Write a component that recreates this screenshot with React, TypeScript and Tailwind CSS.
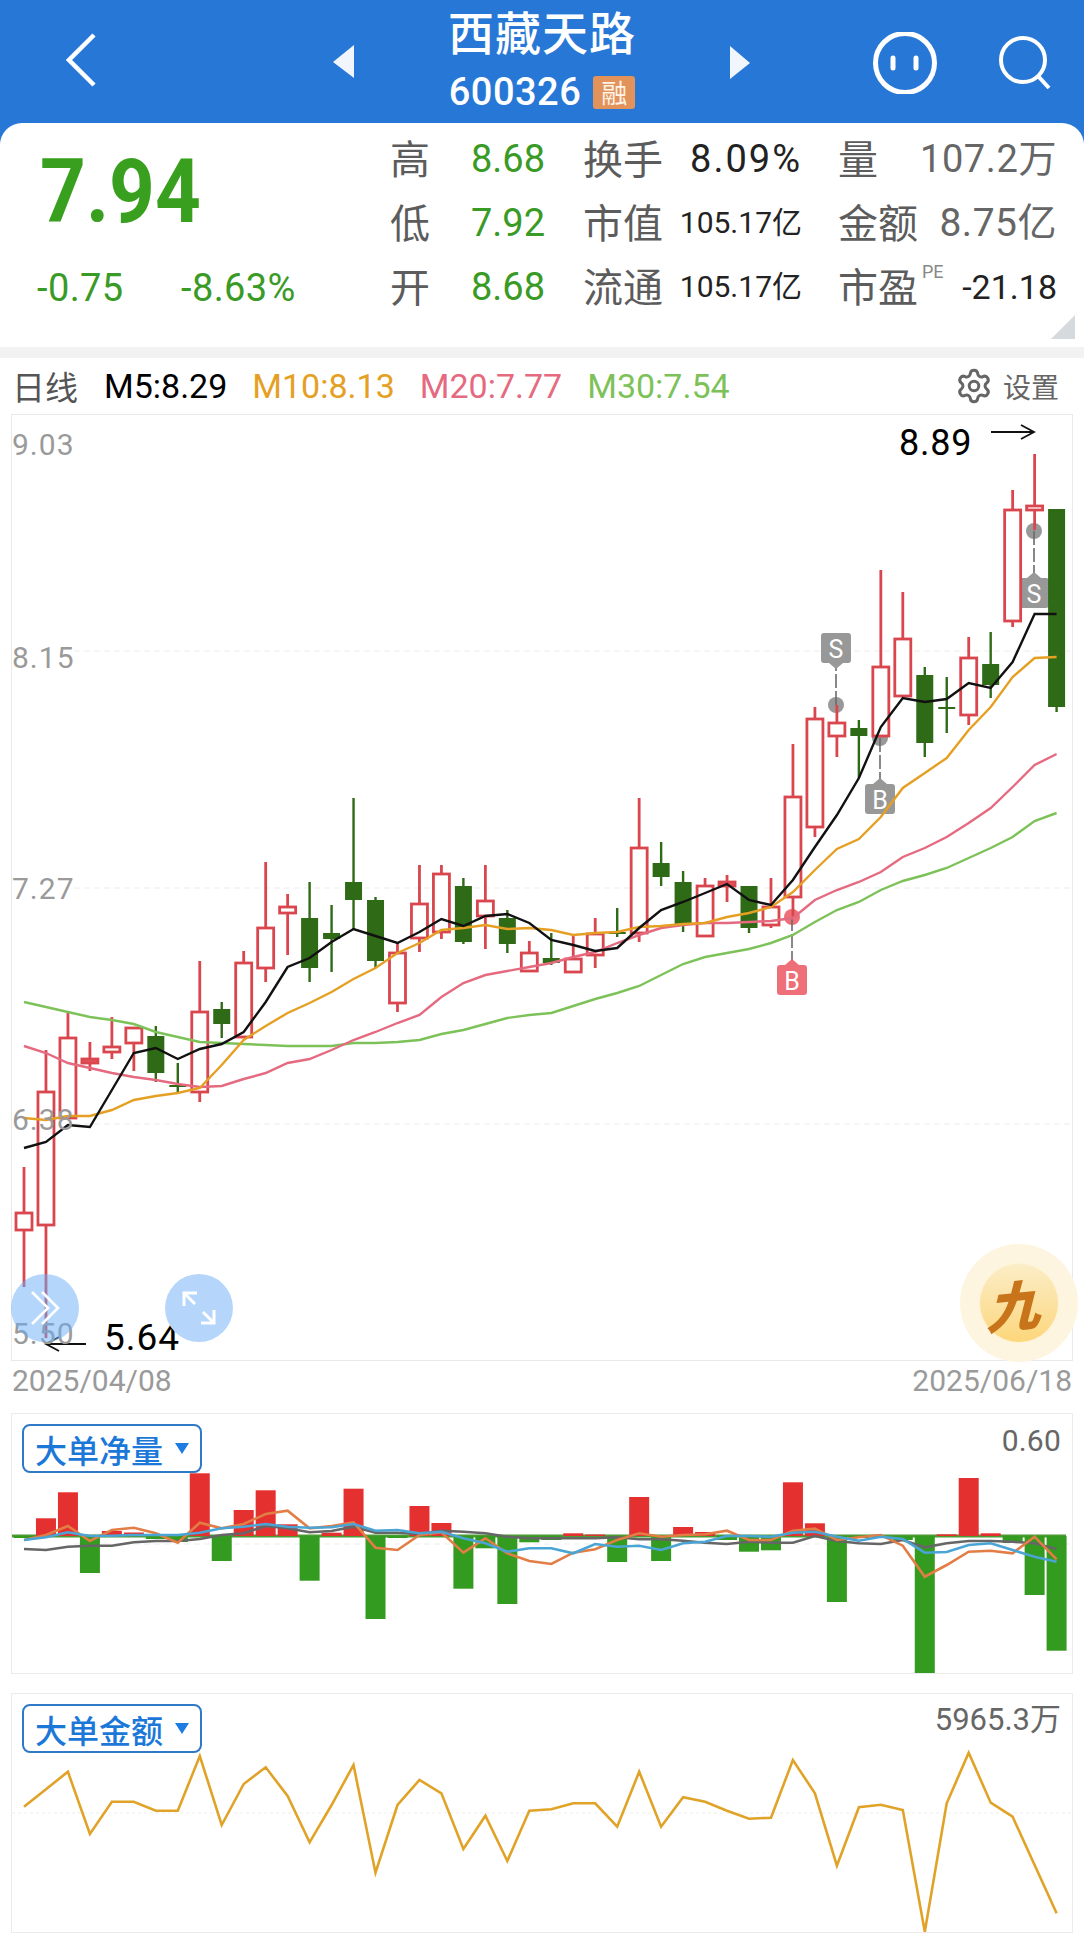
import React from "react";
import { Settings } from "lucide-react";

const X = (i: number) => 24 + 21.97 * i;
type C = [number, number, number, number, number];
// 1 = rising (hollow red), 0 = falling (solid green): type, high, bodyTop, bodyBottom, low
const candles: C[] = [
  [1,1167,1213,1230,1287],[1,1050,1092,1225,1338],[1,1013,1038,1118,1118],[2,1042,1059,1063,1071],
  [1,1017,1047,1052,1059],[1,1028,1028,1043,1071],[0,1026,1036,1073,1082],[0,1063,1085,1087,1094],
  [1,961,1012,1092,1102],[0,1002,1009,1024,1038],[1,951,963,1037,1037],[1,862,928,968,982],
  [1,894,907,913,955],[0,882,918,968,982],[0,905,933,939,972],[0,798,882,900,929],
  [0,897,900,961,968],[1,942,953,1003,1012],[1,865,904,938,952],[1,865,874,932,939],
  [0,878,886,942,944],[1,865,901,916,949],[0,910,918,944,953],[1,941,953,971,971],
  [0,933,958,963,965],[1,935,959,972,972],[1,918,934,955,968],[0,908,932,934,937],
  [1,798,848,933,942],[0,842,863,877,886],[0,871,882,924,932],[1,878,886,936,936],
  [2,875,882,886,902],[0,886,886,928,933],[1,878,907,925,928],[1,744,797,897,917],
  [1,707,719,827,837],[1,705,723,736,757],[0,720,728,736,778],[1,570,667,736,736],
  [1,592,639,696,696],[0,667,675,743,757],[0,677,707,708,733],[1,637,658,715,725],
  [0,632,664,685,698],[1,490,510,621,627],[1,454,506,510,530],[0,509,509,707,712],
];
const m5 = [1148,1142,1125,1127,1090,1053,1048,1059,1049,1044,1032,1002,967,958,942,929,936,943,932,919,926,916,914,923,940,945,951,948,928,910,902,893,884,900,905,880,847,815,778,727,698,702,699,683,688,662,614,614];
const m10 = [1118,1120,1116,1116,1110,1100,1096,1093,1088,1065,1040,1026,1013,1003,992,979,968,953,943,930,928,925,929,928,930,935,933,932,927,926,924,923,917,913,907,892,870,849,839,817,788,773,758,730,707,677,658,657];
const m20 = [1046,1053,1063,1068,1073,1077,1080,1084,1087,1086,1079,1073,1063,1059,1050,1040,1032,1023,1015,997,983,975,971,967,963,957,952,943,935,928,925,923,923,922,921,918,900,890,882,872,857,848,837,823,808,787,765,754];
const m30 = [1002,1007,1012,1017,1020,1024,1032,1037,1042,1043,1044,1045,1046,1046,1046,1043,1043,1042,1040,1034,1030,1024,1018,1015,1013,1006,999,993,986,975,964,957,953,949,943,935,922,910,902,890,881,875,868,858,848,837,821,813];
const bars = [-2,17.7,43.7,-37,5,3.5,-3,-6,62.7,-25,26,45.7,11.7,-44.7,3.3,47.3,-83,-2,30,13,-52.7,-12.3,-68,-6.3,-4,2.7,1.5,-26,39,-25,9,4,-4,-15.7,-14.3,53.7,12.7,-66,-2,-1,-4,-138,1.7,58,2.7,-7,-59,-114.7];
const orange = [420,405,378,423,390,383,400,428,368,385,372,342,332,385,378,367,443,450,405,397,458,415,460,483,492,458,448,420,400,410,405,403,392,420,420,392,386,420,412,405,437,530,495,455,452,460,410,478];
const blue = [420,412,397,408,407,405,405,405,398,385,380,372,380,383,382,372,392,390,400,395,415,430,455,445,445,460,432,440,437,450,430,425,408,408,410,398,395,410,422,410,417,458,456,435,430,450,470,485];
const gray = [447,450,440,437,437,427,423,423,417,405,400,378,385,397,393,380,398,398,402,392,395,400,410,415,415,415,415,412,418,418,422,428,432,425,428,428,408,423,430,432,420,442,430,423,423,425,430,447];
const amount = [380,328,275,462,365,365,392,392,228,435,312,262,348,487,375,255,578,375,300,340,507,407,543,392,388,370,370,440,275,440,352,365,392,416,413,240,340,557,382,374,390,755,370,218,368,410,555,700];

const pts = (a: number[]) => a.map((y, i) => `${X(i).toFixed(1)},${y}`).join(" ");
const subPts = (a: number[], base: number) => a.map((y, i) => `${X(i).toFixed(1)},${(base + y / 3).toFixed(1)}`).join(" ");

const RED = "#d9464e";
const GREEN = "#2f6a17";
const num = "font-['Roboto','Noto_Sans_CJK_SC',sans-serif]";

function Marker({ x, circleY, boxTop, label, color, up }: { x: number; circleY: number; boxTop: number; label: string; color: string; up: boolean }) {
  const lineEnd = up ? boxTop : boxTop + 30;
  const tipY = up ? boxTop - 6 : boxTop + 36;
  return (
    <g>
      <circle cx={x} cy={circleY} r={8} fill={color} />
      <line x1={x} x2={x} y1={circleY} y2={lineEnd} stroke="#6b6b6b" strokeWidth={1.6} strokeDasharray="14 3" />
      <polygon points={`${x - 7},${lineEnd} ${x + 7},${lineEnd} ${x},${tipY}`} fill={color} />
      <rect x={x - 15} y={boxTop} width={30} height={30} rx={3} fill={color} />
      <text x={x} y={boxTop + 25} textAnchor="middle" fontSize={25} fill="#fff" fontFamily="Roboto, sans-serif">{label}</text>
    </g>
  );
}

function Picker({ text }: { text: string }) {
  return (
    <div className="absolute left-[10px] top-[10px] flex h-[49px] w-[180px] items-center rounded-[8px] border-2 border-[#2f79c6] bg-white pl-[11px]">
      <span className="text-[32px] leading-none font-medium text-[#1c78d8] font-['Noto_Sans_CJK_SC',sans-serif]">{text}</span>
      <svg width="14" height="11" viewBox="0 0 14 11" className="ml-[12px]"><polygon points="0,0 14,0 7,11" fill="#1c7ce0" /></svg>
    </div>
  );
}

function Stat({ label, value, cls }: { label: React.ReactNode; value: React.ReactNode; cls?: string }) {
  return (
    <>
      {label}
      <div className={cls}>{value}</div>
    </>
  );
}

const lab = "-mt-[4px] whitespace-nowrap text-[40px] leading-none text-[#5c5c5c] font-['Noto_Sans_CJK_SC',sans-serif]";
const hi = `text-[38px] leading-none text-[#3a9a26] text-right ${num}`;

export default function App() {
  return (
    <div className="relative h-[1956px] w-[1084px] overflow-hidden bg-white font-['Noto_Sans_CJK_SC',sans-serif]">
      {/* top bar */}
      <header className="flex h-[143px] w-full items-start bg-[#2778d6] text-white">
        <div className="w-[333px] shrink-0 pl-[66px] pt-[33px]">
          <svg width="30" height="54" viewBox="0 0 30 54" fill="none"><polyline points="28,2 3,27 28,52" stroke="#fff" strokeWidth="4.5" /></svg>
        </div>
        <svg width="21" height="33" viewBox="0 0 21 33" className="mt-[45px] shrink-0"><polygon points="21,0 21,33 0,17" fill="#f1f6fc" /></svg>
        <div className="flex w-[376px] shrink-0 flex-col items-center pt-[6px]">
          <div className="text-[46px] leading-[48px] font-medium tracking-[1px]">西藏天路</div>
          <div className="mt-[21px] flex items-center">
            <span className={`text-[38px] leading-[34px] tracking-[0.5px] font-medium ${num}`}>600326</span>
            <span className="ml-[12px] flex h-[33px] w-[42px] items-center justify-center rounded-[3px] bg-[#e2935c] text-[26px] leading-none text-[#fff3e6]">融</span>
          </div>
        </div>
        <svg width="20" height="33" viewBox="0 0 20 33" className="mt-[46px] shrink-0"><polygon points="0,0 0,33 20,17" fill="#f1f6fc" /></svg>
        <svg width="68" height="62" viewBox="0 0 68 62" fill="none" className="ml-[121px] mt-[32px] shrink-0">
          <circle cx="34" cy="31" r="29.5" stroke="#fff" strokeWidth="5" />
          <line x1="22" y1="26" x2="22" y2="36" stroke="#fff" strokeWidth="5" strokeLinecap="round" />
          <line x1="45" y1="26" x2="45" y2="36" stroke="#fff" strokeWidth="5" strokeLinecap="round" />
        </svg>
        <svg width="54" height="56" viewBox="0 0 54 56" fill="none" className="ml-[60px] mt-[34px] shrink-0">
          <circle cx="24" cy="26" r="22" stroke="#fff" strokeWidth="4" />
          <line x1="39" y1="42" x2="50" y2="54" stroke="#fff" strokeWidth="4" />
        </svg>
      </header>

      {/* quote card */}
      <section className="relative z-10 -mt-[20px] flex h-[224px] w-full rounded-t-[22px] bg-white">
        <div className="w-[390px] shrink-0 pl-[37px]">
          <div className={`ml-[3px] mt-[33px] origin-left scale-y-[1.12] text-[80px] leading-[72px] font-bold text-[#38a01e] ${num}`}>7.94</div>
          <div className={`mt-[43px] flex text-[38px] leading-[34px] tracking-[0.4px] text-[#3a9a26] ${num}`}>
            <span className="w-[144px]">-0.75</span>
            <span>-8.63%</span>
          </div>
        </div>
        <div className="mt-[4px] grid h-[192px] w-[667px] grid-cols-[38px_117px_118px_139px_117px_138px] grid-rows-[64px_64px_64px] items-center">
          <Stat label={<div className={lab}>高</div>} value="8.68" cls={hi} />
          <Stat label={<div className={`pl-[38px] ${lab}`}>换手</div>} value="8.09%" cls={`text-[38px] leading-none tracking-[2px] text-[#222] text-right ${num}`} />
          <Stat label={<div className={`pl-[36px] ${lab}`}>量</div>} value="107.2万" cls={`text-[38px] leading-none tracking-[0.6px] text-[#666] text-right ${num}`} />
          <Stat label={<div className={lab}>低</div>} value="7.92" cls={hi} />
          <Stat label={<div className={`pl-[38px] ${lab}`}>市值</div>} value="105.17亿" cls={`text-[30px] leading-none text-[#222] text-right ${num}`} />
          <Stat label={<div className={`pl-[36px] ${lab}`}>金额</div>} value="8.75亿" cls={`text-[39px] leading-none tracking-[0.5px] text-[#666] text-right ${num}`} />
          <Stat label={<div className={lab}>开</div>} value="8.68" cls={hi} />
          <Stat label={<div className={`pl-[38px] ${lab}`}>流通</div>} value="105.17亿" cls={`text-[30px] leading-none text-[#222] text-right ${num}`} />
          <Stat
            label={
              <div className={`relative pl-[36px] ${lab}`}>
                市盈
                <span className={`absolute left-[120px] top-[-2px] text-[18px] text-[#888] ${num}`}>PE</span>
              </div>
            }
            value="-21.18"
            cls={`text-[34px] leading-none text-[#222] text-right ${num}`}
          />
        </div>
        <svg width="24" height="24" viewBox="0 0 24 24" className="absolute right-[9px] top-[192px]"><polygon points="24,0 24,24 0,24" fill="#d5dade" /></svg>
      </section>

      <div className="h-[11px] bg-[#f2f2f2]" />

      {/* legend */}
      <div className="flex h-[56px] items-center pl-[12px] text-[34px] leading-none">
        <span className="w-[67px] text-[33px] text-[#555]">日线</span>
        <span className={`ml-[25px] text-black ${num}`}>M5:8.29</span>
        <span className={`ml-[25px] text-[#e5a024] ${num}`}>M10:8.13</span>
        <span className={`ml-[25px] text-[#e56a80] ${num}`}>M20:7.77</span>
        <span className={`ml-[25px] text-[#7dc259] ${num}`}>M30:7.54</span>
        <Settings size={38} strokeWidth={1.9} className="ml-auto text-[#666]" />
        <span className="ml-[10px] mr-[25px] text-[28px] text-[#666]">设置</span>
      </div>

      {/* main chart */}
      <div className="relative mx-[11px] h-[947px] w-[1062px] border border-[#e9e9e9]">
        <svg viewBox="12 415 1060 945" className="block h-full w-full" fill="none">
          {[651, 888, 1124].map((y) => (
            <line key={y} x1={74} x2={1072} y1={y} y2={y} stroke="#eeeeee" strokeWidth={1.2} strokeDasharray="6 4" />
          ))}
          <Marker x={836} circleY={705} boxTop={633} label="S" color="#989898" up={false} />
          <Marker x={880} circleY={738} boxTop={784} label="B" color="#989898" up />
          <Marker x={1034} circleY={531} boxTop={578} label="S" color="#989898" up />
          <Marker x={792} circleY={917} boxTop={965} label="B" color="#ee6f78" up />
          {candles.map(([t, h, top, bot, l], i) => {
            const x = X(i);
            const up = t !== 0;
            return (
              <g key={i}>
                <line x1={x} x2={x} y1={h} y2={l} stroke={up ? RED : GREEN} strokeWidth={up ? 2.8 : 2.4} />
                {up ? (
                  <rect x={x - 8} y={top} width={16} height={Math.max(bot - top, 2)} fill={t === 2 ? "#e8555d" : "#fff"} stroke={RED} strokeWidth={2.8} />
                ) : (
                  <rect x={x - 8.5} y={top} width={17} height={Math.max(bot - top, 2)} fill={GREEN} />
                )}
              </g>
            );
          })}
          <polyline points={pts(m30)} stroke="#7dc259" strokeWidth={2.4} />
          <polyline points={pts(m20)} stroke="#e56a80" strokeWidth={2.4} />
          <polyline points={pts(m10)} stroke="#e5a024" strokeWidth={2.4} />
          <polyline points={pts(m5)} stroke="#111" strokeWidth={2.4} />
          <polyline points="991,432 1034,432" stroke="#111" strokeWidth={1.8} />
          <polyline points="1021,425 1034,432 1021,439" stroke="#111" strokeWidth={1.8} />
          <polyline points="86,1344 46,1344" stroke="#111" strokeWidth={1.8} />
          <polyline points="59,1337 46,1344 59,1351" stroke="#111" strokeWidth={1.8} />
        </svg>

        <span className={`absolute left-0 top-[16px] text-[30px] leading-[28px] tracking-[1px] text-[#9a9a9a] ${num}`}>9.03</span>
        <span className={`absolute left-0 top-[229px] text-[30px] leading-[28px] tracking-[1px] text-[#9a9a9a] ${num}`}>8.15</span>
        <span className={`absolute left-0 top-[460px] text-[30px] leading-[28px] tracking-[1px] text-[#9a9a9a] ${num}`}>7.27</span>
        <span className={`absolute left-0 top-[691px] text-[30px] leading-[28px] tracking-[1px] text-[#9a9a9a] ${num}`}>6.38</span>
        <span className={`absolute left-0 top-[905px] text-[30px] leading-[28px] tracking-[1px] text-[#9a9a9a] ${num}`}>5.50</span>
        <span className={`absolute left-[887px] top-[10px] text-[36px] leading-[36px] tracking-[0.8px] text-black ${num}`}>8.89</span>
        <span className={`absolute left-[92px] top-[905px] text-[37px] leading-[36px] tracking-[1px] text-black ${num}`}>5.64</span>

        {/* round buttons */}
        <div className="absolute left-[-1px] top-[859px] flex h-[68px] w-[68px] items-center justify-center rounded-full bg-[#6aaef5]/50">
          <svg width="32" height="36" viewBox="0 0 32 36" fill="none"><polyline points="3,2 19,18 3,34" stroke="#fff" strokeWidth="2.6" /><polyline points="13,2 29,18 13,34" stroke="#fff" strokeWidth="2.6" /></svg>
        </div>
        <div className="absolute left-[153px] top-[859px] flex h-[68px] w-[68px] items-center justify-center rounded-full bg-[#b5d6fa]">
          <svg width="36" height="36" viewBox="0 0 36 36" fill="none" stroke="#fff" strokeWidth="3">
            <line x1="3" y1="3" x2="33" y2="33" />
            <polyline points="3,16 3,3 16,3" />
            <polyline points="33,20 33,33 20,33" />
            <line x1="14" y1="14" x2="22" y2="22" stroke="#b5d6fa" strokeWidth="5" />
          </svg>
        </div>
        <div className="absolute left-[948px] top-[829px] flex h-[118px] w-[118px] items-center justify-center rounded-full bg-[#fdf5df]">
          <div className="flex h-[80px] w-[80px] items-center justify-center rounded-full border border-[#fff3d4] bg-gradient-to-b from-[#fbedc6] to-[#fcd67a]">
            <span className="-rotate-6 -skew-x-[20deg] text-[54px] leading-none font-black text-[#c8741a]">九</span>
          </div>
        </div>
      </div>

      {/* dates */}
      <div className={`flex h-[39px] items-center justify-between px-[12px] text-[30px] leading-none text-[#9a9a9a] ${num}`}>
        <span>2025/04/08</span>
        <span>2025/06/18</span>
      </div>

      {/* net volume */}
      <div className="relative mx-[11px] mt-[13px] h-[261px] w-[1062px] border border-[#ebebeb]">
        <svg viewBox="12 1414 1060 259" className="block h-full w-full" fill="none">
          <line x1={74} x2={1072} y1={1544} y2={1544} stroke="#eeeeee" strokeWidth={1.2} strokeDasharray="6 4" />
          <line x1={12} x2={1066} y1={1536} y2={1536} stroke="#4b9a33" strokeWidth={3} />
          {bars.map((v, i) => (
            <rect key={i} x={X(i) - 10} y={v > 0 ? 1536 - v : 1536} width={20} height={Math.abs(v)} fill={v > 0 ? "#e53030" : "#339b1f"} />
          ))}
          <polyline points={subPts(gray, 1400)} stroke="#666" strokeWidth={2.6} />
          <polyline points={subPts(orange, 1400)} stroke="#e27d45" strokeWidth={2.6} />
          <polyline points={subPts(blue, 1400)} stroke="#4aa5d5" strokeWidth={2.6} />
        </svg>
        <Picker text="大单净量" />
        <span className={`absolute right-[11px] top-[12px] text-[30px] leading-[30px] tracking-[0.2px] text-[#666] ${num}`}>0.60</span>
      </div>

      {/* amount */}
      <div className="relative mx-[11px] mt-[19px] h-[240px] w-[1062px] border border-[#ebebeb]">
        <svg viewBox="12 1694 1060 238" className="block h-full w-full" fill="none">
          <line x1={12} x2={1072} y1={1813} y2={1813} stroke="#eeeeee" strokeWidth={1.2} strokeDasharray="3 3" />
          <polyline points={subPts(amount, 1680)} stroke="#e0a328" strokeWidth={2.6} />
        </svg>
        <Picker text="大单金额" />
        <span className={`absolute right-[11px] top-[11px] text-[31px] leading-[30px] text-[#666] ${num}`}>5965.3万</span>
      </div>
    </div>
  );
}
